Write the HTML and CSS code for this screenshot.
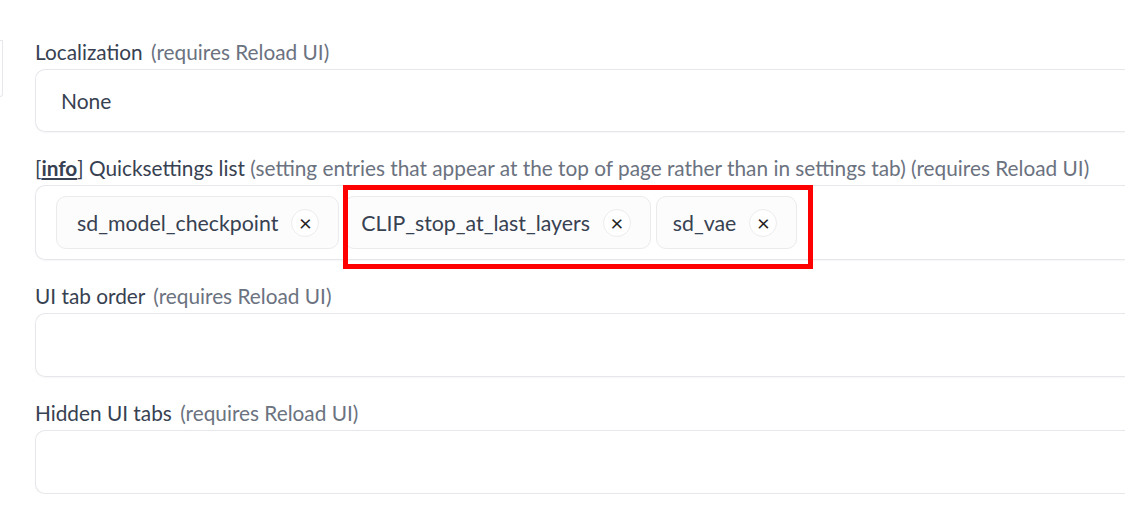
FILE: index.html
```html
<!DOCTYPE html>
<html lang="en">
<head>
  <meta charset="UTF-8" />
  <title>Settings - User interface</title>
  <link rel="stylesheet" href="styles.css">
</head>
<body>
  <div class="page">
    <div class="side-tab"></div>
    <div class="settings">
      <div class="field">
        <label class="label">Localization <span class="note">(requires Reload UI)</span></label>
        <div class="box box-select">None</div>
      </div>

      <div class="field quick">
        <label class="label">[<a class="info">info</a>] Quicksettings list <span class="note">(setting entries that appear at the top of page rather than in settings tab) (requires Reload UI)</span></label>
        <div class="box box-chips">
          <div class="chip">sd_model_checkpoint <span class="chip-x">&times;</span></div>
          <div class="chip">CLIP_stop_at_last_layers <span class="chip-x">&times;</span></div>
          <div class="chip">sd_vae <span class="chip-x">&times;</span></div>
        </div>
        <div class="highlight"></div>
      </div>

      <div class="field">
        <label class="label">UI tab order <span class="note">(requires Reload UI)</span></label>
        <div class="box box-empty"></div>
      </div>

      <div class="field">
        <label class="label">Hidden UI tabs <span class="note">(requires Reload UI)</span></label>
        <div class="box box-empty"></div>
      </div>
    </div>
  </div>
</body>
</html>
```

FILE: styles.css
```css
body {
  margin: 0;
  background: #fff;
  font-family: "Source Sans Pro", Lato, "Noto Sans", sans-serif;
  color: #374151;
  overflow: hidden;
}
.page {
  display: flex;
  padding-top: 40px;
}
.side-tab {
  width: 2px;
  height: 55px;
  border: 1px solid #e5e7eb;
  border-left: none;
  border-radius: 0 0 8px 0;
  margin-right: 32px;
  flex-shrink: 0;
}
.settings {
  flex: 1;
  min-width: 0;
  display: flex;
  flex-direction: column;
  gap: 24px;
}
.field {
  position: relative;
  display: flex;
  flex-direction: column;
  gap: 5px;
}
.label {
  font-size: 20.8px;
  line-height: 24px;
  color: #374151;
  white-space: nowrap;
}
.note {
  color: #6b7280;
  margin-left: 3px;
}
.quick .note {
  margin-left: 0;
}
.info {
  font-weight: bold;
  text-decoration: underline;
  color: #374151;
}
/* boxes run off the right edge of the shot, so no right border */
.box {
  border: 1px solid #e5e7eb;
  border-right: none;
  border-radius: 10px 0 0 10px;
  box-shadow: 0 1px 2px rgba(0, 0, 0, 0.04);
  box-sizing: border-box;
}
.box-select {
  height: 63px;
  display: flex;
  align-items: center;
  padding-left: 25px;
  font-size: 21px;
}
.box-empty {
  height: 64px;
}
.box-chips {
  height: 75px;
  display: flex;
  align-items: center;
  gap: 5px;
  padding-left: 20px;
}
.chip {
  height: 53px;
  display: flex;
  align-items: center;
  gap: 13px;
  padding: 0 19px 0 16px;
  border: 1px solid #ebebeb;
  border-radius: 10px;
  background: #fcfcfc;
  font-size: 21.3px;
  box-sizing: border-box;
}
.chip:first-child {
  padding-left: 20px;
}
.chip-x {
  width: 26px;
  height: 26px;
  border: 1px solid #ececec;
  border-radius: 50%;
  background: #fff;
  display: flex;
  align-items: center;
  justify-content: center;
  font-size: 22px;
  line-height: 1;
  color: #222;
}
.highlight {
  position: absolute;
  left: 308px;
  top: 29px;
  width: 460px;
  height: 74px;
  border: 5px solid #f00;
}
```
